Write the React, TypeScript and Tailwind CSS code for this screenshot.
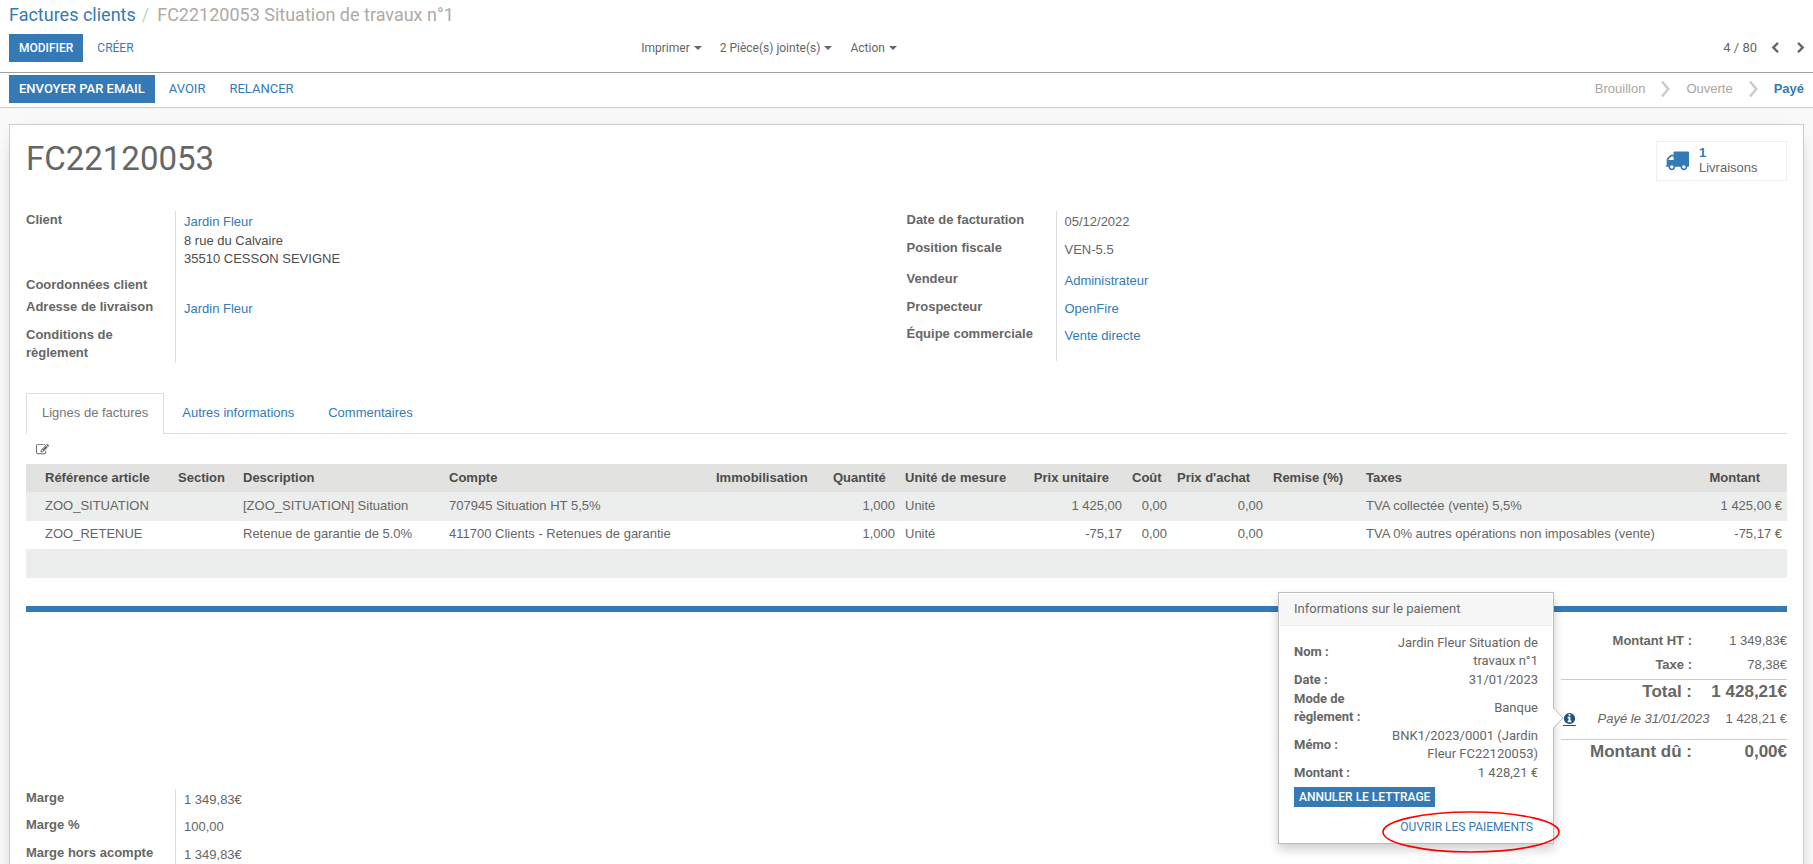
import { ReactNode } from "react";
import clsx from "clsx";

const PATHS = {
  truck:
    "M640 1408q0-52-38-90t-90-38-90 38-38 90 38 90 90 38 90-38 38-90zm-384-512h384v-256h-158q-13 0-22 9l-195 195q-9 9-9 22v30zm1280 512q0-52-38-90t-90-38-90 38-38 90 38 90 90 38 90-38 38-90zm256-1088v1024q0 15-4 26.5t-13.5 18.5-16.5 11.5-23.5 6-22.5 2-25.5 0-22.5-.5q0 106-75 181t-181 75-181-75-75-181h-384q0 106-75 181t-181 75-181-75-75-181h-64q-3 0-22.5.5t-25.5 0-22.5-2-23.5-6-16.5-11.5-13.5-18.5-4-26.5q0-26 19-45t45-19v-320q0-8-.5-35t0-38 2.5-34.5 6.5-37 14-30.5 22.5-30l198-198q19-19 50.5-32t58.5-13h160v-192q0-26 19-45t45-19h1024q26 0 45 19t19 45z",
  edit: "M888 1184l116-116-152-152-116 116v56h96v96h56zm440-720q-16-16-33 1l-350 350q-17 17-1 33t33-1l350-350q17-17 1-33zm80 594v190q0 119-84.5 203.5t-203.5 84.5h-832q-119 0-203.5-84.5t-84.5-203.5v-832q0-119 84.5-203.5t203.5-84.5h832q63 0 117 25 15 7 18 23 3 17-9 29l-49 49q-14 14-32 8-23-6-45-6h-832q-66 0-113 47t-47 113v832q0 66 47 113t113 47h832q66 0 113-47t47-113v-126q0-13 9-22l64-64q15-15 35-7t20 29zm-96-738l288 288-672 672h-288v-288zm444 132l-92 92-288-288 92-92q28-28 68-28t68 28l152 152q28 28 28 68t-28 68z",
  info: "M1152 1376v-160q0-14-9-23t-23-9h-96v-512q0-14-9-23t-23-9h-320q-14 0-23 9t-9 23v160q0 14 9 23t23 9h96v320h-96q-14 0-23 9t-9 23v160q0 14 9 23t23 9h448q14 0 23-9t9-23zm-128-896v-160q0-14-9-23t-23-9h-192q-14 0-23 9t-9 23v160q0 14 9 23t23 9h192q14 0 23-9t9-23zm640 416q0 209-103 385.5t-279.5 279.5-385.5 103-385.5-103-279.5-279.5-103-385.5 103-385.5 279.5-279.5 385.5-103 385.5 103 279.5 279.5 103 385.5z",
  chevron:
    "M1363 877l-742 742q-19 19-45 19t-45-19l-166-166q-19-19-19-45t19-45l531-531-531-531q-19-19-19-45t19-45l166-166q19-19 45-19t45 19l742 742q19 19 19 45t-19 45z",
};

function Icon({ name, className }: { name: keyof typeof PATHS; className?: string }) {
  return (
    <svg viewBox="0 0 1792 1792" fill="currentColor" aria-hidden="true" className={className}>
      <path d={PATHS[name]} />
    </svg>
  );
}

function Button({ primary, size = "text-xs", children }: { primary?: boolean; size?: string; children: ReactNode }) {
  return (
    <button
      type="button"
      className={clsx(
        "h-7 px-[10px] uppercase font-['Roboto',sans-serif]",
        size,
        primary ? "bg-[#337ab7] font-medium text-white" : "text-[#337ab7]"
      )}
    >
      {children}
    </button>
  );
}

function ControlPanel() {
  return (
    <header className="h-[73px] border-b border-[#a0a0a0] px-[9px] font-['Roboto',sans-serif]">
      <nav className="flex h-[34px] items-center pb-1 text-lg leading-[30px] text-[#b0a9a4]">
        <a href="#factures" className="text-[#337ab7]">Factures clients</a>
        <span className="pl-[6px] pr-2 text-[#ccc]">/</span>
        <span>FC22120053 Situation de travaux n°1</span>
      </nav>
      <div className="flex h-7 items-center">
        <div className="flex w-[35%] gap-1">
          <Button primary>Modifier</Button>
          <Button>Créer</Button>
        </div>
        <div className="flex gap-[18px] pl-1 text-xs text-[#666]">
          {["Imprimer", "2 Pièce(s) jointe(s)", "Action"].map((label) => (
            <button key={label} type="button" className="flex items-center gap-1">
              {label}
              <span className="border-x-4 border-t-4 border-x-transparent border-t-[#666]" />
            </button>
          ))}
        </div>
        <div className="-mr-[3px] ml-auto flex items-center text-[13px] text-[#666]">
          <span className="pr-3">4 / 80</span>
          <button type="button" aria-label="Précédent" className="pr-[14px]">
            <Icon name="chevron" className="size-3 -scale-x-100" />
          </button>
          <button type="button" aria-label="Suivant">
            <Icon name="chevron" className="size-3" />
          </button>
        </div>
      </div>
    </header>
  );
}

function StatusBar() {
  return (
    <div className="flex h-[35px] items-start border-b border-[#ccc] px-[9px] pt-[2px]">
      <div className="flex gap-1">
        <Button primary size="text-[13px]">Envoyer par email</Button>
        <Button size="text-[13px]">Avoir</Button>
        <Button size="text-[13px]">Relancer</Button>
      </div>
      <ul className="ml-auto flex h-7 items-center text-[#aaa5a2]">
        <li>Brouillon</li>
        <li><StatusArrow /></li>
        <li>Ouverte</li>
        <li><StatusArrow /></li>
        <li className="font-bold text-[#337ab7]">Payé</li>
      </ul>
    </div>
  );
}

function StatusArrow() {
  return (
    <svg viewBox="0 0 9 16" fill="none" stroke="#ccc" strokeWidth="2.6" className="mx-4 h-4 w-[9px]">
      <path d="M1 0.5L7.2 8L1 15.5" />
    </svg>
  );
}

type Field = { label: string; height: string; value?: ReactNode };

function FieldGroup({ fields, className }: { fields: Field[]; className?: string }) {
  return (
    <dl className={clsx("w-1/2", className)}>
      {fields.map((f) => (
        <div key={f.label} className={clsx("flex", f.height)}>
          <dt className="w-[150px] shrink-0 border-r border-[#ddd] pr-4 font-bold">{f.label}</dt>
          <dd className="pl-2 pt-[2px]">{f.value}</dd>
        </div>
      ))}
    </dl>
  );
}

function Link({ children }: { children: ReactNode }) {
  return <a href="#fiche" className="text-[#337ab7]">{children}</a>;
}

const clientFields: Field[] = [
  {
    label: "Client",
    height: "h-[65px]",
    value: (
      <>
        <Link>Jardin Fleur</Link>
        <div className="pt-px text-[#4c4c4c]">
          8 rue du Calvaire
          <br />
          35510 CESSON SEVIGNE
        </div>
      </>
    ),
  },
  { label: "Coordonnées client", height: "h-[22px]" },
  { label: "Adresse de livraison", height: "h-7", value: <Link>Jardin Fleur</Link> },
  { label: "Conditions de règlement", height: "h-[37px]" },
];

const invoiceFields: Field[] = [
  { label: "Date de facturation", height: "h-7", value: "05/12/2022" },
  { label: "Position fiscale", height: "h-[31px]", value: "VEN-5.5" },
  { label: "Vendeur", height: "h-7", value: <Link>Administrateur</Link> },
  { label: "Prospecteur", height: "h-[27px]", value: <Link>OpenFire</Link> },
  { label: "Équipe commerciale", height: "h-9", value: <Link>Vente directe</Link> },
];

const marginFields: Field[] = [
  { label: "Marge", height: "h-[27px]", value: "1\u00a0349,83€" },
  { label: "Marge %", height: "h-7", value: "100,00" },
  { label: "Marge hors acompte", height: "h-7", value: "1\u00a0349,83€" },
];

const columns = [
  { title: "Référence article", width: "w-[147px]" },
  { title: "Section", width: "w-[65px]" },
  { title: "Description", width: "w-[206px]" },
  { title: "Compte", width: "w-[267px]" },
  { title: "Immobilisation", width: "w-[117px]" },
  { title: "Quantité", width: "w-[72px]", numeric: true },
  { title: "Unité de mesure", width: "w-[128px]" },
  { title: "Prix unitaire", width: "w-[99px]", numeric: true },
  { title: "Coût", width: "w-[45px]", numeric: true },
  { title: "Prix d'achat", width: "w-[96px]", numeric: true },
  { title: "Remise (%)", width: "w-[93px]", numeric: true },
  { title: "Taxes", width: "w-auto" },
  { title: "Montant", width: "w-[94px]", numeric: true },
];

const lines = [
  ["ZOO_SITUATION", "", "[ZOO_SITUATION] Situation", "707945 Situation HT 5,5%", "", "1,000", "Unité", "1\u00a0425,00", "0,00", "0,00", "", "TVA collectée (vente) 5,5%", "1\u00a0425,00\u00a0€"],
  ["ZOO_RETENUE", "", "Retenue de garantie de 5.0%", "411700 Clients - Retenues de garantie", "", "1,000", "Unité", "-75,17", "0,00", "0,00", "", "TVA 0% autres opérations non imposables (vente)", "-75,17\u00a0€"],
  ["", "", "", "", "", "", "", "", "", "", "", "", ""],
];

function InvoiceLines() {
  return (
    <table className="w-full table-fixed whitespace-nowrap">
      <thead>
        <tr className="h-7 bg-[#e2e2e0] text-[#4c4c4c]">
          {columns.map((c) => (
            <th
              key={c.title}
              className={clsx(
                c.width,
                "pb-px pl-[5px] pr-[18px] first:pl-[19px] last:pr-[27px] font-bold",
                c.numeric ? "text-right" : "text-left"
              )}
            >
              {c.title}
            </th>
          ))}
        </tr>
      </thead>
      <tbody>
        {lines.map((line, i) => (
          <tr key={i} className="h-[29px] odd:bg-[#eceeed] even:h-7">
            {line.map((cell, j) => (
              <td key={j} className={clsx("px-[5px] pb-[2px] first:pl-[19px]", columns[j].numeric && "text-right")}>
                {cell}
              </td>
            ))}
          </tr>
        ))}
      </tbody>
    </table>
  );
}

const payment = [
  ["Nom :", "Jardin Fleur Situation de travaux n°1"],
  ["Date :", "31/01/2023"],
  ["Mode de règlement :", "Banque"],
  ["Mémo :", "BNK1/2023/0001 (Jardin Fleur FC22120053)"],
  ["Montant :", "1\u00a0428,21\u00a0€"],
];

function PaymentPopover() {
  return (
    <div className="absolute right-[calc(100%+7px)] -top-[113px] z-10 w-[276px] border border-[#bbb] bg-white font-['Roboto',sans-serif] shadow-[0_5px_10px_rgba(0,0,0,0.2)]">
      <h3 className="mx-px mt-px h-8 border-b border-[#ebebeb] bg-[#f7f7f7] px-[14px] leading-[30px]">
        Informations sur le paiement
      </h3>
      <div className="px-[15px] pb-[6px] pt-2">
        <table className="w-full">
          <tbody>
            {payment.map(([label, value]) => (
              <tr key={label}>
                <th className="w-[84px] pb-px text-left font-bold">{label}</th>
                <td className="pb-px text-right">{value}</td>
              </tr>
            ))}
          </tbody>
        </table>
        <button type="button" className="mt-1 block h-5 bg-[#337ab7] px-[5px] text-xs font-medium uppercase text-white">
          Annuler le lettrage
        </button>
        <div className="relative mt-[10px] flex justify-end pr-[5px]">
          <button type="button" className="h-5 text-xs uppercase text-[#337ab7]">Ouvrir les paiements</button>
          <svg viewBox="0 0 178 42" fill="none" stroke="#f00" strokeWidth="1.6" className="absolute -right-[22px] -top-[6px] h-[42px] w-[178px]">
            <ellipse cx="89" cy="21" rx="88" ry="20" />
          </svg>
        </div>
      </div>
      {/* pointer towards the info icon */}
      <svg viewBox="0 0 11 22" className="absolute -right-[11px] top-[114px] h-[22px] w-[11px]">
        <path d="M0 0.5L10 11L0 21.5" fill="#fff" stroke="#bbb" />
      </svg>
    </div>
  );
}

function Totals() {
  return (
    <div className="ml-auto w-[226px]">
      <TotalRow className="h-6 leading-6" label="Montant HT :" value={"1\u00a0349,83€"} />
      <TotalRow className="h-[26px] leading-6" label="Taxe :" value="78,38€" />
      <TotalRow className="h-[26px] border-t border-[#ccc] text-[17px] font-bold leading-6" label="Total :" value={"1\u00a0428,21€"} />
      <div className="relative flex h-[34px] items-center justify-between pb-[6px]">
        <button type="button" aria-label="Informations sur le paiement" className="ml-[2px] border-b border-[#23527c] text-[#23527c]">
          <Icon name="info" className="size-[13px]" />
        </button>
        <span className="ml-auto pr-4 italic">Payé le 31/01/2023</span>
        <span>1&nbsp;428,21&nbsp;€</span>
        <PaymentPopover />
      </div>
      <TotalRow className="h-[26px] border-t border-[#ccc] text-[17px] font-bold leading-6" label="Montant dû :" value="0,00€" />
    </div>
  );
}

function TotalRow({ label, value, className }: { label: string; value: string; className?: string }) {
  return (
    <div className={clsx("flex justify-end", className)}>
      <span className="font-bold">{label}</span>
      <span className="w-[95px] text-right">{value}</span>
    </div>
  );
}

export default function App() {
  return (
    <div className="flex h-screen flex-col overflow-hidden bg-white font-['Liberation_Sans',Arial,sans-serif] text-[13px] leading-[18px] text-[#666]">
      <ControlPanel />
      <StatusBar />
      <main className="flex-1 overflow-hidden bg-[#f9f9f9] px-[9px] pt-4">
        <section className="border border-[#ccc] bg-white px-4 pb-10 shadow-[0_5px_20px_-15px_#000]">
          <div className="flex items-start justify-between pt-[14px]">
            <h1 className="h-[72px] font-['Roboto',sans-serif] text-[33px] leading-10">FC22120053</h1>
            <button type="button" className="mt-[2px] flex h-10 w-[131px] items-center gap-[10px] border border-[#eee] px-2 pb-[2px] text-left leading-[15px]">
              <Icon name="truck" className="size-6 text-[#337ab7]" />
              <span>
                <span className="block font-bold text-[#337ab7]">1</span>
                Livraisons
              </span>
            </button>
          </div>

          <div className="flex items-start">
            <FieldGroup fields={clientFields} />
            <FieldGroup fields={invoiceFields} />
          </div>

          <div role="tablist" className="mt-[30px] flex border-b border-[#ddd]">
            <button type="button" role="tab" aria-selected="true" className="-mb-px h-[41px] border border-b-0 border-[#ddd] bg-white px-[15px] pb-[3px] text-[#777]">
              Lignes de factures
            </button>
            <button type="button" role="tab" className="ml-[3px] px-[15px] pb-px text-[#337ab7]">Autres informations</button>
            <button type="button" role="tab" className="ml-1 px-[15px] pb-px text-[#337ab7]">Commentaires</button>
          </div>
          <div className="flex h-[30px] items-center pl-[10px]">
            <button type="button" aria-label="Éditer les lignes">
              <Icon name="edit" className="size-[13px]" />
            </button>
          </div>
          <InvoiceLines />

          <hr className="mb-[17px] mt-7 border-t-[6px] border-[#337ab7]" />
          <Totals />
          <FieldGroup fields={marginFields} className="mt-6" />
        </section>
      </main>
    </div>
  );
}
